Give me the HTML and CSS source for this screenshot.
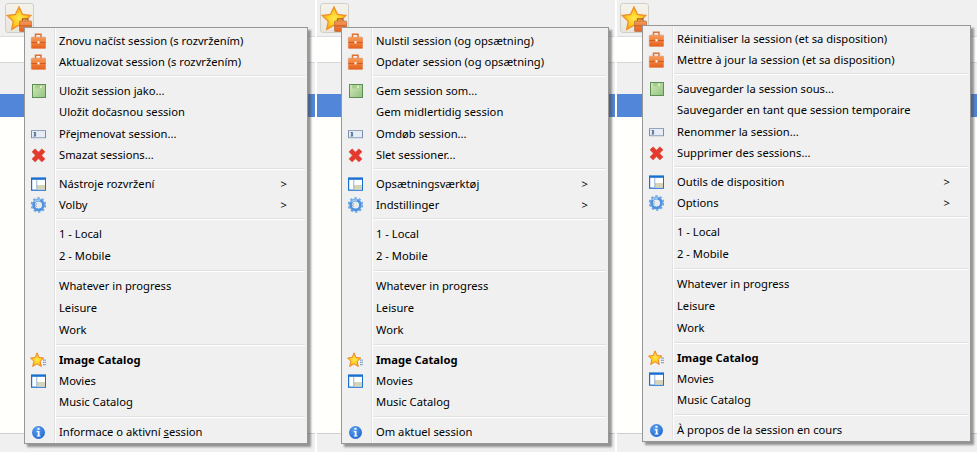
FILE: index.html
```html
<!DOCTYPE html>
<html lang="en">
<head>
<meta charset="utf-8">
<title>Session menu</title>
<link rel="stylesheet" href="styles.css">
</head>
<body>
<svg class="defs" width="0" height="0" aria-hidden="true">
  <defs>
    <linearGradient id="gCase" x1="0" y1="0" x2="0" y2="1"><stop offset="0" stop-color="#f89a58"/><stop offset="1" stop-color="#e4601c"/></linearGradient>
    <linearGradient id="gSave" x1="0" y1="0" x2="1" y2="1"><stop offset="0" stop-color="#d6e9bd"/><stop offset="1" stop-color="#8fc27c"/></linearGradient>
    <radialGradient id="gStar" cx=".5" cy=".5" r=".55"><stop offset="0" stop-color="#ffe94f"/><stop offset=".6" stop-color="#ffc81a"/><stop offset="1" stop-color="#f9960f"/></radialGradient>
    <radialGradient id="gInfo" cx=".4" cy=".3" r=".8"><stop offset="0" stop-color="#5aa0f0"/><stop offset="1" stop-color="#1b63cf"/></radialGradient>
    <symbol id="i-case" viewBox="0 0 16 16">
      <path d="M5.500 4.500V1.200h5.500v3.300" fill="none" stroke="#dd7133" stroke-width="1.500"/>
      <rect x="1.300" y="4.200" width="14.400" height="11.300" rx=".8" fill="url(#gCase)" stroke="#e08a5a" stroke-width=".6"/>
      <rect x="1.300" y="9" width="14.400" height=".8" fill="#c9541a"/>
      <rect x="7.500" y="8.200" width="2" height="2.200" fill="#fff"/>
    </symbol>
    <symbol id="i-save" viewBox="0 0 16 16">
      <rect x="2.500" y="1.500" width="13" height="13" fill="url(#gSave)" stroke="#5d8f55"/>
      <rect x="5" y="2" width="8" height="3.500" fill="#a9cf90"/>
      <rect x="10" y="2.500" width="2" height="2.500" fill="#dcecca"/>
    </symbol>
    <symbol id="i-rename" viewBox="0 0 16 16">
      <rect x="1.500" y="4.700" width="14" height="7" fill="#fff" stroke="#7b8fae"/>
      <rect x="2" y="5.200" width="13" height="6" fill="#e6ecf5"/>
      <path d="M3.600 6.500h2v3.600h-2M4.600 6.500v3.600" fill="none" stroke="#3c5a88" stroke-width=".8"/>
    </symbol>
    <symbol id="i-x" viewBox="0 0 16 16">
      <path d="M3.500 3.200 13.500 13.500M13.500 3.200 3.500 13.500" fill="none" stroke="#d9665a" stroke-width="5"/>
      <path d="M3.500 3.200 13.500 13.500M13.500 3.200 3.500 13.500" fill="none" stroke="#e6392e" stroke-width="3.800"/>
    </symbol>
    <symbol id="i-layout" viewBox="0 0 16 16">
      <rect x="1.600" y="2" width="14" height="12.200" fill="#fff" stroke="#1a6fd0" stroke-width="1.200"/>
      <rect x="1.500" y="2" width="14" height="1.800" fill="#1a6fd0"/>
      <rect x="7" y="9" width="8" height="4.600" fill="#d6d4b8"/>
      <rect x="6.400" y="4" width=".8" height="9.600" fill="#7b9dc8"/>
    </symbol>
    <symbol id="i-gear" viewBox="0 0 16 16">
      <circle cx="8.500" cy="8" r="7" fill="none" stroke="#6ea6e4" stroke-width="1.600" stroke-dasharray="2.500 2"/>
      <circle cx="8.500" cy="8" r="4.900" fill="none" stroke="#4f93de" stroke-width="2.800"/>
      <path d="M4.500 5.200A5 5 0 0 1 10 3.200" fill="none" stroke="#a9cdf2" stroke-width="1.500"/>
      <circle cx="8.500" cy="8" r="3" fill="#e6ebf0"/>
      <path d="M6.500 10a3 3 0 0 1 0-4" fill="none" stroke="#8a9aab" stroke-width=".8"/>
    </symbol>
    <symbol id="i-star" viewBox="0 0 16 16">
      <path d="M7 .8 9 5.500l4.800.5-3.600 3.300 1.100 5.200L7 11.800 2.700 14.500l1.100-5.200L.6 6l4.700-.5z" fill="url(#gStar)" stroke="#f0882a" stroke-width="1"/>
      <path d="M13 7.500h1.300v1.300H13zM14.600 7.500h1.300v1.300h-1.300zM13 9.800h1.300v1.300H13zM14.600 9.800h1.300v1.300h-1.300zM13 12h1.300v1.300H13zM14.600 12h1.300v1.300h-1.300z" fill="#7b9cc6"/>
    </symbol>
    <symbol id="i-info" viewBox="0 0 16 16">
      <circle cx="8.500" cy="8.500" r="6.500" fill="url(#gInfo)"/>
      <rect x="7.500" y="3.800" width="2" height="2" fill="#fff"/>
      <path d="M6.800 7H9.500v4.400h1v1.200H6.800v-1.200h1V8.200h-1z" fill="#fff"/>
    </symbol>
    <symbol id="i-main" viewBox="0 0 28 28">
      <path d="M13 3 16.500 10.400l8.300 1.100-6.100 5.700 1.600 8.200-7.300-4.100-7.300 4.100 1.600-8.200-6.100-5.700 8.300-1.100z" fill="url(#gStar)" stroke="#f0902a" stroke-width="1.300"/>
      <path d="M16.500 17.500V14.800h5.500v2.700" fill="none" stroke="#b35a28" stroke-width="1.200"/>
      <rect x="13.500" y="17" width="12" height="10.500" rx=".8" fill="url(#gCase)" stroke="#b8693f" stroke-width=".7"/>
      <rect x="13.500" y="21.500" width="12" height=".8" fill="#b9551f"/>
    </symbol>
  </defs>
</svg>

<div class="stage">

  <section class="panel panel-cs">
    <div class="toolbar"><span class="star-btn"><svg class="main-icon"><use href="#i-main"/></svg></span></div>
    <div class="blank"></div>
    <div class="header"></div>
    <div class="selected"></div>
    <div class="content"></div>
    <div class="status"></div>
    <nav class="menu menu-cs">
      <div class="row icon"><svg class="ico"><use href="#i-case"/></svg><span>Znovu načíst session (s rozvržením)</span></div>
      <div class="row icon"><svg class="ico"><use href="#i-case"/></svg><span>Aktualizovat session (s rozvržením)</span></div>
      <div class="sep"></div>
      <div class="row icon"><svg class="ico"><use href="#i-save"/></svg><span>Uložit session jako...</span></div>
      <div class="row"><span>Uložit dočasnou session</span></div>
      <div class="row icon"><svg class="ico"><use href="#i-rename"/></svg><span>Přejmenovat session...</span></div>
      <div class="row icon"><svg class="ico"><use href="#i-x"/></svg><span>Smazat sessions...</span></div>
      <div class="sep"></div>
      <div class="row icon"><svg class="ico"><use href="#i-layout"/></svg><span>Nástroje rozvržení</span><b class="arrow">&gt;</b></div>
      <div class="row icon"><svg class="ico"><use href="#i-gear"/></svg><span>Volby</span><b class="arrow">&gt;</b></div>
      <div class="sep"></div>
      <div class="row"><span>1 - Local</span></div>
      <div class="row"><span>2 - Mobile</span></div>
      <div class="sep"></div>
      <div class="row"><span>Whatever in progress</span></div>
      <div class="row"><span>Leisure</span></div>
      <div class="row"><span>Work</span></div>
      <div class="sep"></div>
      <div class="row icon"><svg class="ico"><use href="#i-star"/></svg><strong>Image Catalog</strong></div>
      <div class="row icon"><svg class="ico"><use href="#i-layout"/></svg><span>Movies</span></div>
      <div class="row"><span>Music Catalog</span></div>
      <div class="sep"></div>
      <div class="row icon"><svg class="ico"><use href="#i-info"/></svg><span>Informace o aktivní <u>s</u>ession</span></div>
    </nav>
  </section>

  <section class="panel panel-da">
    <div class="toolbar"><span class="star-btn"><svg class="main-icon"><use href="#i-main"/></svg></span></div>
    <div class="blank"></div>
    <div class="header"></div>
    <div class="selected"></div>
    <div class="content"></div>
    <div class="status"></div>
    <nav class="menu menu-da">
      <div class="row icon"><svg class="ico"><use href="#i-case"/></svg><span>Nulstil session (og opsætning)</span></div>
      <div class="row icon"><svg class="ico"><use href="#i-case"/></svg><span>Opdater session (og opsætning)</span></div>
      <div class="sep"></div>
      <div class="row icon"><svg class="ico"><use href="#i-save"/></svg><span>Gem session som...</span></div>
      <div class="row"><span>Gem midlertidig session</span></div>
      <div class="row icon"><svg class="ico"><use href="#i-rename"/></svg><span>Omdøb session...</span></div>
      <div class="row icon"><svg class="ico"><use href="#i-x"/></svg><span>Slet sessioner...</span></div>
      <div class="sep"></div>
      <div class="row icon"><svg class="ico"><use href="#i-layout"/></svg><span>Opsætningsværktøj</span><b class="arrow">&gt;</b></div>
      <div class="row icon"><svg class="ico"><use href="#i-gear"/></svg><span>Indstillinger</span><b class="arrow">&gt;</b></div>
      <div class="sep"></div>
      <div class="row"><span>1 - Local</span></div>
      <div class="row"><span>2 - Mobile</span></div>
      <div class="sep"></div>
      <div class="row"><span>Whatever in progress</span></div>
      <div class="row"><span>Leisure</span></div>
      <div class="row"><span>Work</span></div>
      <div class="sep"></div>
      <div class="row icon"><svg class="ico"><use href="#i-star"/></svg><strong>Image Catalog</strong></div>
      <div class="row icon"><svg class="ico"><use href="#i-layout"/></svg><span>Movies</span></div>
      <div class="row"><span>Music Catalog</span></div>
      <div class="sep"></div>
      <div class="row icon"><svg class="ico"><use href="#i-info"/></svg><span>Om aktuel session</span></div>
    </nav>
  </section>

  <section class="panel panel-fr">
    <div class="toolbar"><span class="star-btn"><svg class="main-icon"><use href="#i-main"/></svg></span></div>
    <div class="blank"></div>
    <div class="header"></div>
    <div class="selected"></div>
    <div class="content"></div>
    <div class="status"></div>
    <nav class="menu menu-fr">
      <div class="row icon"><svg class="ico"><use href="#i-case"/></svg><span>Réinitialiser la session (et sa disposition)</span></div>
      <div class="row icon"><svg class="ico"><use href="#i-case"/></svg><span>Mettre à jour la session (et sa disposition)</span></div>
      <div class="sep"></div>
      <div class="row icon"><svg class="ico"><use href="#i-save"/></svg><span>Sauvegarder la session sous...</span></div>
      <div class="row"><span>Sauvegarder en tant que session temporaire</span></div>
      <div class="row icon"><svg class="ico"><use href="#i-rename"/></svg><span>Renommer la session...</span></div>
      <div class="row icon"><svg class="ico"><use href="#i-x"/></svg><span>Supprimer des sessions...</span></div>
      <div class="sep"></div>
      <div class="row icon"><svg class="ico"><use href="#i-layout"/></svg><span>Outils de disposition</span><b class="arrow">&gt;</b></div>
      <div class="row icon"><svg class="ico"><use href="#i-gear"/></svg><span>Options</span><b class="arrow">&gt;</b></div>
      <div class="sep"></div>
      <div class="row"><span>1 - Local</span></div>
      <div class="row"><span>2 - Mobile</span></div>
      <div class="sep"></div>
      <div class="row"><span>Whatever in progress</span></div>
      <div class="row"><span>Leisure</span></div>
      <div class="row"><span>Work</span></div>
      <div class="sep"></div>
      <div class="row icon"><svg class="ico"><use href="#i-star"/></svg><strong>Image Catalog</strong></div>
      <div class="row icon"><svg class="ico"><use href="#i-layout"/></svg><span>Movies</span></div>
      <div class="row"><span>Music Catalog</span></div>
      <div class="sep"></div>
      <div class="row icon"><svg class="ico"><use href="#i-info"/></svg><span>À propos de la session en cours</span></div>
    </nav>
  </section>

</div>
</body>
</html>
```
FILE: styles.css
```css
* { box-sizing: border-box; }
html, body { margin: 0; padding: 0; background: #fff; overflow: hidden; }
.defs { position: absolute; }
.stage {
  display: flex;
  gap: 2px;
  width: 977px;
  height: 452px;
  font: 11.2px/1 "Noto Sans", "Liberation Sans", sans-serif;
  color: #000;
}
.panel {
  position: relative;
  display: flex;
  flex-direction: column;
  height: 452px;
}
.panel-cs { width: 315px; }
.panel-da { width: 298px; }
.panel-fr { width: 360px; }

.toolbar {
  height: 37px;
  padding: 3px 0 0 3px;
  background: #f0f0f0;
  border-bottom: 1px solid #dcdcdc;
}
.panel-cs .toolbar { padding-left: 5px; }
.star-btn {
  display: block;
  width: 29px;
  height: 30px;
  background: linear-gradient(#f5f3ea, #e8e6dc);
  border: 1px solid #d0d0c8;
  border-radius: 3px;
}
.main-icon { display: block; width: 28px; height: 28px; overflow: visible; }
.blank { height: 25px; background: #fffffd; }
.header { height: 32px; background: #f0f0f0; border-top: 1px solid #d8d8d8; }
.selected { height: 23px; background: #5186d8; }
.content { flex: 1; background: #fffffc; }
.status { height: 19px; background: #f0f0f0; border-top: 1px solid #cfcfcf; }

.menu {
  position: absolute;
  padding: 2px 0 1px;
  background: linear-gradient(to right, #f0f0f0 29px, #e2e2e2 29px, #e2e2e2 30px, #fff 30px, #fff 31px, #f0f0f0 31px);
  border: 1px solid #979797;
  box-shadow: 3px 3px 2px rgba(70, 70, 70, .55);
}
.menu-cs { left: 24px; top: 27px; width: 284px; }
.menu-da { left: 24px; top: 27px; width: 268px; }
.menu-fr { left: 25px; top: 25px; width: 329px; }

.row {
  display: flex;
  align-items: center;
  height: 22px;
  padding-left: 34px;
  white-space: nowrap;
}
.row.icon { height: 21px; padding-left: 0; }
.ico { flex: none; width: 16px; height: 16px; margin: 0 13px 0 5px; }
.row strong { font-weight: 700; }
.arrow { margin-left: auto; margin-right: 20px; font-weight: 400; }
.sep {
  height: 8px;
  margin: 0 2px 0 31px;
  padding-top: 3px;
  background: linear-gradient(#f0f0f0 3px, #e0e0e0 3px, #e0e0e0 4px, #fff 4px, #fff 5px, #f0f0f0 5px);
}
```
